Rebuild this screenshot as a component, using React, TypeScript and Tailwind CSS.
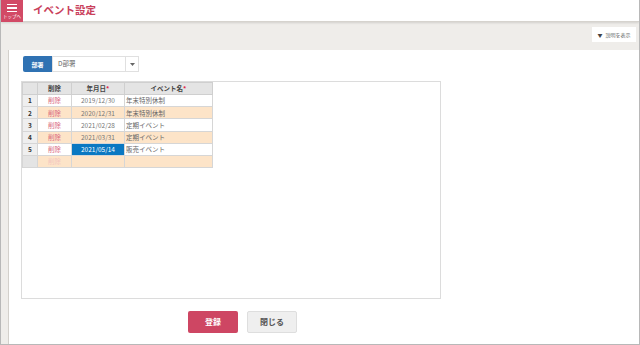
import React from "react";

const rows = [
  { no: "1", date: "2019/12/30", name: "年末特別休制", alt: false },
  { no: "2", date: "2020/12/31", name: "年末特別休制", alt: true },
  { no: "3", date: "2021/02/28", name: "定期イベント", alt: false },
  { no: "4", date: "2021/03/31", name: "定期イベント", alt: true },
  { no: "5", date: "2021/05/14", name: "販売イベント", alt: false, selected: true },
];

export default function App() {
  return (
    <div
      className="w-[640px] h-[345px] overflow-hidden flex flex-col bg-[#efedea] border-x border-b border-[#b8b8b8]"
      style={{ fontFamily: '"Noto Sans CJK JP", "Noto Sans", sans-serif' }}
    >
      {/* header */}
      <div className="h-[22px] shrink-0 flex items-center bg-white border-b border-[#d6d3ce] shadow-[0_1px_2px_rgba(0,0,0,0.12)]">
        <div className="w-[22px] h-[22px] bg-[#d24a66] flex flex-col items-center pt-[4px]">
          <div className="w-[10px] h-[1.5px] bg-white mb-[2px]"></div>
          <div className="w-[10px] h-[1.5px] bg-white mb-[2px]"></div>
          <div className="w-[10px] h-[1.5px] bg-white"></div>
          <span className="text-[4.5px] leading-none text-white mt-[2px] whitespace-nowrap">トップへ</span>
        </div>
        <h1 className="ml-[10px] text-[10.5px] font-bold text-[#c9405b] leading-none">イベント設定</h1>
      </div>

      {/* toolbar */}
      <div className="h-[28px] shrink-0 flex justify-end items-start pt-[5px] pr-[3px]">
        <button className="w-[44px] h-[15px] bg-white flex items-center justify-center gap-[3px]">
          <span className="text-[5px] text-[#444] leading-none">▼</span>
          <span className="text-[5px] text-[#666] leading-none">説明を表示</span>
        </button>
      </div>

      {/* panel */}
      <div className="flex-1 ml-[7px] bg-white border-l border-[#d3d0cb] pl-[12px] pt-[6px] flex flex-col">
        <div className="flex items-center ml-[2px] h-[16px]">
          <div className="w-[29px] h-[16px] bg-[#2f72b3] rounded-l-[2px] flex items-center justify-center text-white text-[6px] font-bold">部署</div>
          <div className="w-[87px] h-[16px] border border-[#e0e0e0] flex items-center">
            <span className="flex-1 pl-[5px] text-[6.5px] text-[#666]">D部署</span>
            <div className="w-[13px] h-full border-l border-[#e0e0e0] flex items-center justify-center">
              <svg width="5" height="3" viewBox="0 0 5 3"><path d="M0 0 L5 0 L2.5 3 Z" fill="#666" /></svg>
            </div>
          </div>
        </div>

        <div className="mt-[9px] w-[420px] h-[218px] border border-[#dcdcdc]">
          <table className="border-collapse text-[6.5px] leading-none">
            <thead>
              <tr className="h-[12px] bg-[#e4e4e4]">
                <th className="w-[15px] border border-[#cfcfcf]"></th>
                <th className="w-[34px] border border-[#cfcfcf] font-bold text-[#444]">削除</th>
                <th className="w-[53px] border border-[#cfcfcf] font-bold text-[#444]">
                  年月日<span className="text-[#e0284a]">*</span>
                </th>
                <th className="w-[88px] border border-[#cfcfcf] font-bold text-[#444]">
                  イベント名<span className="text-[#e0284a]">*</span>
                </th>
              </tr>
            </thead>
            <tbody>
              {rows.map((r) => (
                <tr key={r.no} className={`h-[12.2px] ${r.alt ? "bg-[#fde4c8]" : "bg-white"}`}>
                  <td className="bg-[#efefef] border border-[#d6d6d6] text-center font-bold text-[#333]">{r.no}</td>
                  <td className="border border-[#d6d6d6] text-center text-[#d9667d]">削除</td>
                  <td
                    className={`border border-[#d6d6d6] text-center ${
                      r.selected ? "bg-[#0a78c2] text-white" : "text-[#777]"
                    }`}
                  >
                    {r.date}
                  </td>
                  <td className="border border-[#d6d6d6] pl-[1px] text-[#666]">{r.name}</td>
                </tr>
              ))}
              <tr className="h-[12px] bg-[#fde4c8]">
                <td className="bg-[#e4e4e4] border border-[#d6d6d6]"></td>
                <td className="border border-[#d6d6d6] text-center text-[#f3c4c0]">削除</td>
                <td className="border border-[#d6d6d6]"></td>
                <td className="border border-[#d6d6d6]"></td>
              </tr>
            </tbody>
          </table>
        </div>

        <div className="mt-[12px] flex gap-[9px] pl-[167px]">
          <button className="w-[50px] h-[22px] bg-[#ce4663] rounded-[2px] text-white text-[8px] font-bold">登録</button>
          <button className="w-[50px] h-[22px] bg-[#efefef] border border-[#dedede] rounded-[2px] text-[#555] text-[8px] font-bold">閉じる</button>
        </div>
      </div>
    </div>
  );
}
